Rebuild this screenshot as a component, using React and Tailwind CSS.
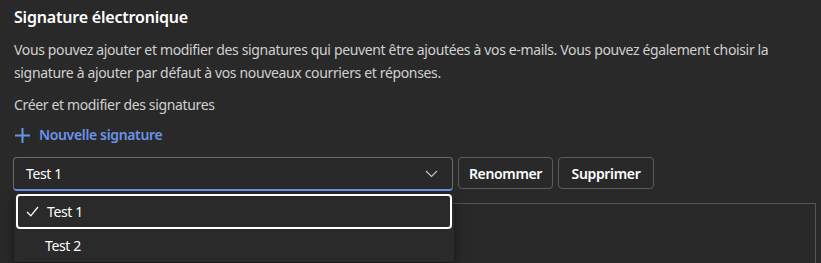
import React from 'react';

const font = { fontFamily: '"Segoe UI", "Noto Sans", "Open Sans", sans-serif' };

const Chevron = () => (
  <svg width="13" height="8" viewBox="0 0 13 8" fill="none" className="text-[#c8c8c8]">
    <path d="M1 1l5.5 5.5L12 1" stroke="currentColor" strokeWidth="1.1" />
  </svg>
);

const Check = () => (
  <svg width="13" height="11" viewBox="0 0 13 11" fill="none" className="text-white">
    <path d="M1 6l3.8 3.8L12 1" stroke="currentColor" strokeWidth="1.3" />
  </svg>
);

const Plus = () => (
  <svg width="17" height="17" viewBox="0 0 17 17" fill="none" className="text-[#6b93ea]">
    <path d="M8.5 1v15M1 8.5h15" stroke="currentColor" strokeWidth="2" />
  </svg>
);

export default function App() {
  return (
    <div className="w-[821px] h-[263px] overflow-hidden bg-[#292929] text-[#d6d6d6] tracking-[-0.35px]" style={font}>
      <div className="pl-[14px] pr-[6px] pt-[4px]">
        <h2 className="text-[16px] font-semibold text-white leading-[26px] tracking-[-0.2px]">Signature électronique</h2>

        <p className="mt-[8px] text-[14px] leading-[23px] text-[#d0d0d0]">
          Vous pouvez ajouter et modifier des signatures qui peuvent être ajoutées à vos e-mails. Vous pouvez également choisir la signature à ajouter par défaut à vos nouveaux courriers et réponses.
        </p>

        <p className="mt-[11px] text-[14px] leading-[20px] text-[#d0d0d0]">Créer et modifier des signatures</p>

        <button className="mt-[10px] flex items-center gap-[8px] text-[14px] font-semibold text-[#6b93ea] leading-[20px]">
          <Plus />
          Nouvelle signature
        </button>

        <div className="mt-[12px] flex gap-[5px] relative">
          <div className="w-[440px] h-[34px] -ml-[1px] rounded-[4px] border border-[#6a6a6a] border-b-2 border-b-[#6b93ea] flex items-center justify-between pl-[12px] pr-[14px]">
            <span className="text-[14px] text-white">Test 1</span>
            <Chevron />
          </div>
          <button className="w-[95px] h-[32px] rounded-[4px] border border-[#5c5c5c] text-[14px] font-semibold text-white">Renommer</button>
          <button className="w-[96px] h-[32px] rounded-[4px] border border-[#5c5c5c] text-[14px] font-semibold text-white">Supprimer</button>

          <div className="absolute left-[440px] top-[46px] w-[362px] h-[80px] border-t border-r border-[#555555]" />

          <div className="absolute left-0 top-[37px] w-[440px] bg-[#2a2a2a] shadow-[0_4px_10px_rgba(0,0,0,0.5)] px-[2px]">
            <div className="h-[35px] rounded-[4px] border-2 border-white flex items-center pl-[8px] gap-[8px]">
              <Check />
              <span className="text-[14px] text-white">Test 1</span>
            </div>
            <div className="h-[33px] flex items-center pl-[29px]">
              <span className="text-[14px] text-white">Test 2</span>
            </div>
          </div>
        </div>
      </div>
    </div>
  );
}
